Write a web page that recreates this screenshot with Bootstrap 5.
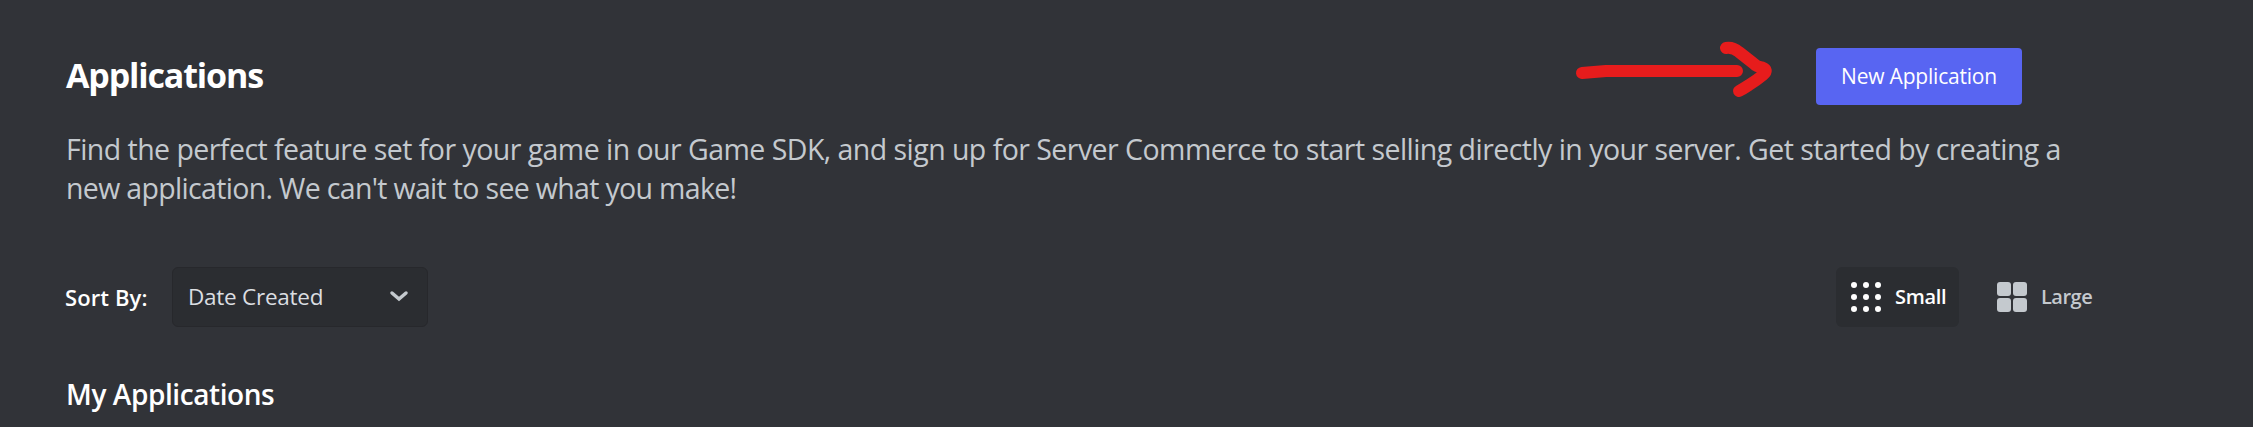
<!DOCTYPE html>
<html lang="en">
<head>
<meta charset="utf-8">
<title>Applications</title>
<link href="https://cdn.jsdelivr.net/npm/bootstrap@5.3.0/dist/css/bootstrap.min.css" rel="stylesheet">
<style>
body{background:#313338;color:#fff;font-family:"Open Sans","Noto Sans",sans-serif;overflow:hidden}
.page{padding:48px 0 0 66px}
.top-row{height:57px;margin-right:231px}
.page-title{font-size:34px;line-height:55px;padding-bottom:2px;font-weight:700;letter-spacing:-1.15px}
.arrow{width:206px;height:60px;margin:-14px 40px 0 0}
.btn-new{width:206px;height:57px;background:#5865f2;border:0;border-radius:4px;color:#fff;font-size:21px;padding:0;letter-spacing:-.2px}
.intro{margin-top:25px;font-size:28.5px;line-height:39px;color:#c4c9ce;white-space:nowrap;letter-spacing:-.54px}
.intro-end{letter-spacing:-.67px}
.tools{margin:59px 123px 0 0;height:60px}
.sort-label{width:106px;font-size:22px;font-weight:600;letter-spacing:.1px;margin-left:-1px;margin-right:1px}
.sort-select{width:256px;height:60px;background:#2b2d31;border:1px solid #27282c;border-radius:6px;padding:0 18px 0 15px;font-size:22.5px;letter-spacing:-.25px;color:#dbdee1}
.size-btn{height:60px;border-radius:6px;font-size:20px;font-weight:600;letter-spacing:-.3px;padding-left:15px}
.size-small{width:123px;background:#2b2d31}
.size-large{width:148px;margin-left:23px;color:#c4c9ce;letter-spacing:-.5px}
.size-btn svg{margin-right:14px}
.sub-title{margin-top:47px;font-size:28px;line-height:40px;font-weight:600;letter-spacing:-.42px}
</style>
</head>
<body>
<main class="page">
  <header class="top-row d-flex align-items-center">
    <h1 class="page-title mb-0 me-auto"><span>Applications</span></h1>
    <svg class="arrow" viewBox="1570 40 206 60" fill="none" stroke="#e71c1c" stroke-width="12" stroke-linecap="round" stroke-linejoin="round"><path d="M1582 73 L1606 71 H1737"/><path d="M1726 48 Q1733 47 1739 52 L1753 63 Q1757 67 1762 67.500 Q1769 70 1763 75 Q1757 80 1749 85 Q1743 89 1739 91"/></svg>
    <button class="btn btn-new"><span>New Application</span></button>
  </header>
  <p class="intro mb-0"><span>Find the perfect feature set for your game in our Game SDK, and sign up for Server Commerce to start selling directly in your server. Get started by creating a</span><br><span class="intro-end">new application. We can't wait to see what you make!</span></p>
  <div class="tools d-flex align-items-center">
    <span class="sort-label">Sort By:</span>
    <div class="sort-select d-flex align-items-center justify-content-between"><span>Date Created</span><svg width="20" height="14" viewBox="0 0 20 14" fill="none" stroke="#c4c9ce" stroke-width="3.500" stroke-linecap="round"><path d="M3 3l7 6 7-6"/></svg></div>
    <div class="size-btn size-small d-flex align-items-center ms-auto"><svg width="30" height="30" fill="#fff"><circle cx="3" cy="3" r="3"/><circle cx="15" cy="3" r="3"/><circle cx="27" cy="3" r="3"/><circle cx="3" cy="15" r="3"/><circle cx="15" cy="15" r="3"/><circle cx="27" cy="15" r="3"/><circle cx="3" cy="27" r="3"/><circle cx="15" cy="27" r="3"/><circle cx="27" cy="27" r="3"/></svg><span>Small</span></div>
    <div class="size-btn size-large d-flex align-items-center"><svg width="30" height="30" fill="#c4c9ce"><rect width="14" height="14" rx="3"/><rect x="16" width="14" height="14" rx="3"/><rect y="16" width="14" height="14" rx="3"/><rect x="16" y="16" width="14" height="14" rx="3"/></svg><span>Large</span></div>
  </div>
  <h2 class="sub-title mb-0"><span>My Applications</span></h2>
</main>
<script src="https://cdn.jsdelivr.net/npm/bootstrap@5.3.0/dist/js/bootstrap.bundle.min.js"></script>
</body>
</html>
